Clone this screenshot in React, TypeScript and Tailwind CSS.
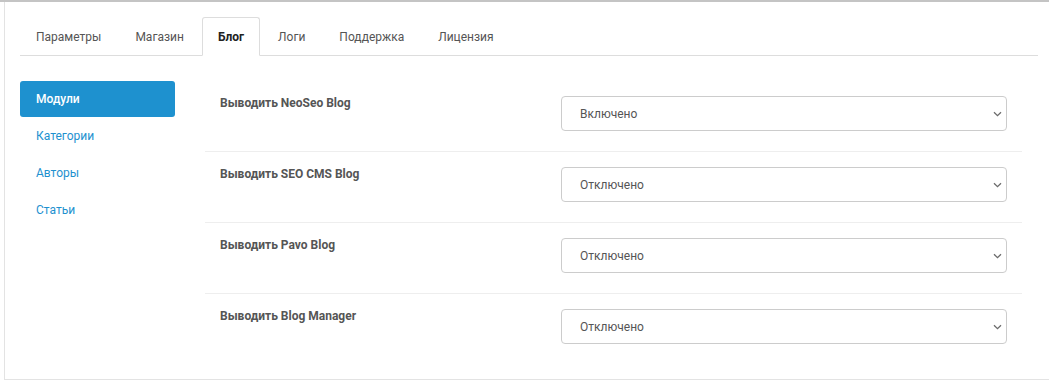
import React from 'react';

const tabs = ['Параметры', 'Магазин', 'Блог', 'Логи', 'Поддержка', 'Лицензия'];
const navItems = ['Модули', 'Категории', 'Авторы', 'Статьи'];

const rows = [
  { label: 'Выводить NeoSeo Blog', value: 'Включено' },
  { label: 'Выводить SEO CMS Blog', value: 'Отключено' },
  { label: 'Выводить Pavo Blog', value: 'Отключено' },
  { label: 'Выводить Blog Manager', value: 'Отключено' },
];

const Chevron = () => (
  <svg width="9" height="6" viewBox="0 0 9 6" className="absolute right-[4px] top-1/2 -translate-y-1/2">
    <path d="M1 1.2 L4.5 4.6 L8 1.2" fill="none" stroke="#6b6b6b" strokeWidth="1.3" />
  </svg>
);

const App = () => {
  return (
    <div className="h-[387px] w-[1049px] overflow-hidden bg-white font-['Roboto',sans-serif]">
      <div className="h-[2px] bg-[#c4c4c4]" />
      <div className="ml-[4px] w-[1050px] border-b border-l border-[#e3e3e3] p-[15px]">
        {/* Tabs */}
        <div className="flex w-[1018px] border-b border-[#dddddd]">
          {tabs.map((tab) => (
            <div
              key={tab}
              className={`-mb-px mr-[2px] flex h-[39px] items-center rounded-t-[3px] border px-[15px] text-[12px] ${
                tab === 'Блог'
                  ? 'border-[#dddddd] border-b-white bg-white font-bold text-[#222]'
                  : 'border-transparent text-[#555]'
              }`}
            >
              {tab}
            </div>
          ))}
        </div>

        <div className="mt-[25px] flex">
          {/* Side nav */}
          <div className="flex w-[155px] flex-col gap-px">
            {navItems.map((item, i) => (
              <div
                key={item}
                className={`flex h-9 items-center rounded-[3px] px-4 text-[12px] ${
                  i === 0 ? 'bg-[#1e91cf] font-medium text-white' : 'text-[#1e91cf]'
                }`}
              >
                {item}
              </div>
            ))}
          </div>

          {/* Settings */}
          <div className="ml-[30px] w-[817px]">
            {rows.map((row, i) => (
              <div
                key={row.label}
                className={`flex pt-[15px] pb-[20px] ${i > 0 ? 'border-t border-[#eeeeee]' : ''}`}
              >
                <div className="w-[356px] pl-[15px] text-[12px] font-bold leading-[14px] text-[#555]">
                  {row.label}
                </div>
                <div className="relative flex h-[35px] w-[446px] items-center rounded-[4px] border border-[#cccccc] pl-[18px] text-[12px] text-[#555]">
                  {row.value}
                  <Chevron />
                </div>
              </div>
            ))}
          </div>
        </div>
      </div>
    </div>
  );
};

export default App;
